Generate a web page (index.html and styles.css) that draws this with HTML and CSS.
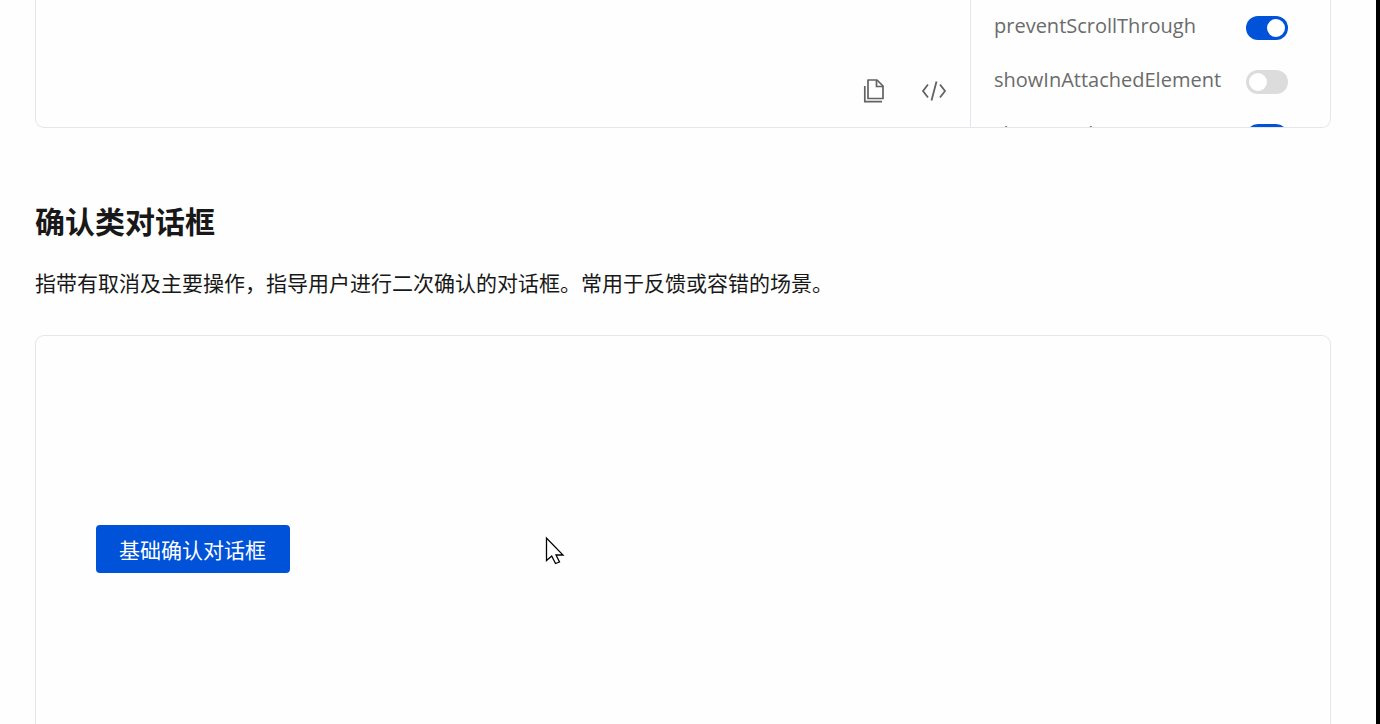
FILE: index.html
```html
<!DOCTYPE html>
<html lang="zh-CN">
<head>
<meta charset="UTF-8">
<title>Dialog 对话框</title>
<link rel="stylesheet" href="styles.css">
</head>
<body>
<main class="page">
    <section class="demo demo-top">
        <div class="demo-preview">
            <div class="demo-actions">
                <button class="icon-btn" type="button" aria-label="复制代码">
                    <svg width="24" height="26" viewBox="0 0 24 26" fill="none" stroke="#626262" stroke-width="1.700">
                        <path d="M5 2h9l6 6v12.500H5z" stroke-linejoin="round"/>
                        <path d="M13.500 2v6.500H20"/>
                        <path d="M1.800 8v15.700H19"/>
                    </svg>
                </button>
                <button class="icon-btn" type="button" aria-label="查看代码">
                    <svg width="26" height="26" viewBox="0 0 26 26" fill="none" stroke="#626262" stroke-width="1.800">
                        <path d="M7 6.500L2 13l5 6.500M19 6.500l5 6.500-5 6.500M15.500 3.500l-5 19"/>
                    </svg>
                </button>
            </div>
        </div>
        <div class="demo-props">
            <div class="prop">
                <label for="preventScrollThrough">preventScrollThrough</label>
                <input class="switch" type="checkbox" id="preventScrollThrough" checked>
            </div>
            <div class="prop">
                <label for="showInAttachedElement">showInAttachedElement</label>
                <input class="switch" type="checkbox" id="showInAttachedElement">
            </div>
            <div class="prop">
                <label for="showOverlay">showOverlay</label>
                <input class="switch" type="checkbox" id="showOverlay" checked>
            </div>
        </div>
    </section>

    <h3 class="title">确认类对话框</h3>
    <p class="desc">指带有取消及主要操作，指导用户进行二次确认的对话框。常用于反馈或容错的场景。</p>

    <section class="demo demo-confirm">
        <button class="btn-primary" type="button">基础确认对话框</button>
    </section>
</main>
<svg class="cursor" width="20" height="29" viewBox="0 0 20 29">
    <path d="M1.500 2v22.500l5.200-4.500 3.800 7.500 4-1.500-3.500-7h7z" fill="#fff" stroke="#000" stroke-width="1.300"/>
</svg>
</body>
</html>
```
FILE: styles.css
```css
* {
    box-sizing: border-box;
}
body {
    margin: 0;
    height: 100vh;
    overflow: hidden;
    background: #fefefe;
    border-right: 4px solid #000;
    color: #181818;
    font-family: "Noto Sans CJK SC", sans-serif;
    font-size: 21px;
}
.page {
    display: flex;
    flex-direction: column;
    height: 100%;
    padding: 0 45px 0 35px;
}
.demo {
    display: flex;
    border: 1px solid #e3e6eb;
    border-radius: 9px;
}

/* live demo, scrolled past its top */
.demo-top {
    flex: none;
    height: 128px;
    border-top: 0;
    border-top-left-radius: 0;
    border-top-right-radius: 0;
    overflow: hidden;
}
.demo-preview {
    flex: 1;
    display: flex;
    align-items: flex-end;
    justify-content: flex-end;
    padding: 23px;
}
.demo-actions {
    display: flex;
    gap: 34px;
}
.icon-btn {
    display: flex;
    padding: 0;
    border: 0;
    background: none;
    cursor: pointer;
}
.demo-props {
    width: 360px;
    padding: 1px 42px 0 23px;
    border-left: 1px solid #e3e6eb;
}
.prop {
    display: flex;
    align-items: center;
    justify-content: space-between;
    height: 54px;
    color: #6b6b6b;
    font-family: "Open Sans", "Noto Sans", sans-serif;
    font-size: 20px;
}
.prop label {
    padding-bottom: 5px;
}
.switch {
    appearance: none;
    display: flex;
    align-items: center;
    width: 42px;
    height: 24px;
    margin: 0;
    padding: 0 3px;
    border-radius: 12px;
    background: #dcdcdc;
    cursor: pointer;
}
.switch::before {
    content: "";
    width: 18px;
    height: 18px;
    border-radius: 50%;
    background: #fff;
}
.switch:checked {
    justify-content: flex-end;
    background: #0052d9;
}

.title {
    margin: 70px 0 0;
    font-size: 30px;
    font-weight: 700;
    line-height: 44px;
}
.desc {
    margin: 23px 0 36px;
    line-height: 34px;
}

/* confirm demo runs on below the window */
.demo-confirm {
    flex: 1;
    align-items: center;
    padding: 37px 60px 0;
    border-bottom: 0;
    border-bottom-left-radius: 0;
    border-bottom-right-radius: 0;
}
.btn-primary {
    height: 48px;
    padding: 0 24px 0 23px;
    border: 0;
    border-radius: 4px;
    background: #0052d9;
    color: #fff;
    font-family: inherit;
    font-size: 21px;
    cursor: pointer;
}
.cursor {
    position: absolute;
    left: 545px;
    top: 536px;
}
```
